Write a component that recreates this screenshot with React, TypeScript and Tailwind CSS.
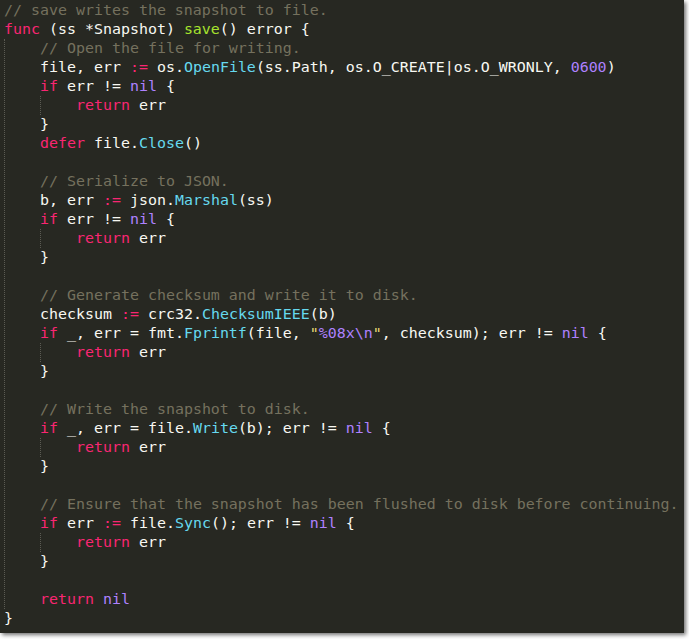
import type { ReactNode } from "react";

const K = ({ children }: { children: ReactNode }) => <span className="text-[#f92672]">{children}</span>;
const F = ({ children }: { children: ReactNode }) => <span className="text-[#66d9ef]">{children}</span>;
const N = ({ children }: { children: ReactNode }) => <span className="text-[#ae81ff]">{children}</span>;
const G = ({ children }: { children: ReactNode }) => <span className="text-[#a6e22e]">{children}</span>;
const S = ({ children }: { children: ReactNode }) => <span className="text-[#e6db74]">{children}</span>;
const C = ({ children }: { children: ReactNode }) => <span className="text-[#75715e]">{children}</span>;

const Line = ({ children }: { children?: ReactNode }) => (
  <div className="h-[19px] leading-[19px] whitespace-pre">{children}</div>
);

// body of the func: guide at column 0, text starts at column 4
const Body = ({ children }: { children: ReactNode }) => (
  <div className="ml-[4px] border-l border-dotted border-[#5b5b53] pl-[35px]">{children}</div>
);

// nested block inside an if
const Nested = ({ children }: { children: ReactNode }) => (
  <div className="border-l border-dotted border-[#5b5b53] pl-[35px]">{children}</div>
);

const ReturnErr = () => (
  <Nested>
    <Line>
      <K>return</K> err
    </Line>
  </Nested>
);

export default function App() {
  return (
    <div className="w-[689px] h-[639px] bg-white overflow-hidden">
      <div
        className="w-[684px] h-[633px] bg-[#272822] text-[#f8f8f2] text-[14.95px] shadow-[2px_2px_4px_rgba(0,0,0,0.55)] overflow-hidden"
        style={{ fontFamily: '"DejaVu Sans Mono", "Liberation Mono", monospace' }}
      >
        <div className="pt-[1px]">
          <div className="pl-[4px]">
            <Line>
              <C>// save writes the snapshot to file.</C>
            </Line>
            <Line>
              <K>func</K> (ss *Snapshot) <G>save</G>() error {"{"}
            </Line>
          </div>
          <Body>
            <Line>
              <C>// Open the file for writing.</C>
            </Line>
            <Line>
              file, err <K>:=</K> os.<F>OpenFile</F>(ss.Path, os.O_CREATE|os.O_WRONLY, <N>0600</N>)
            </Line>
            <Line>
              <K>if</K> err != <N>nil</N> {"{"}
            </Line>
            <ReturnErr />
            <Line>{"}"}</Line>
            <Line>
              <K>defer</K> file.<F>Close</F>()
            </Line>
            <Line />
            <Line>
              <C>// Serialize to JSON.</C>
            </Line>
            <Line>
              b, err <K>:=</K> json.<F>Marshal</F>(ss)
            </Line>
            <Line>
              <K>if</K> err != <N>nil</N> {"{"}
            </Line>
            <ReturnErr />
            <Line>{"}"}</Line>
            <Line />
            <Line>
              <C>// Generate checksum and write it to disk.</C>
            </Line>
            <Line>
              checksum <K>:=</K> crc32.<F>ChecksumIEEE</F>(b)
            </Line>
            <Line>
              <K>if</K> _, err = fmt.<F>Fprintf</F>(file, <S>"</S>
              <N>%08x\n</N>
              <S>"</S>, checksum); err != <N>nil</N> {"{"}
            </Line>
            <ReturnErr />
            <Line>{"}"}</Line>
            <Line />
            <Line>
              <C>// Write the snapshot to disk.</C>
            </Line>
            <Line>
              <K>if</K> _, err = file.<F>Write</F>(b); err != <N>nil</N> {"{"}
            </Line>
            <ReturnErr />
            <Line>{"}"}</Line>
            <Line />
            <Line>
              <C>// Ensure that the snapshot has been flushed to disk before continuing.</C>
            </Line>
            <Line>
              <K>if</K> err <K>:=</K> file.<F>Sync</F>(); err != <N>nil</N> {"{"}
            </Line>
            <ReturnErr />
            <Line>{"}"}</Line>
            <Line />
            <Line>
              <K>return</K> <N>nil</N>
            </Line>
          </Body>
          <div className="pl-[4px]">
            <Line>{"}"}</Line>
          </div>
        </div>
      </div>
    </div>
  );
}
